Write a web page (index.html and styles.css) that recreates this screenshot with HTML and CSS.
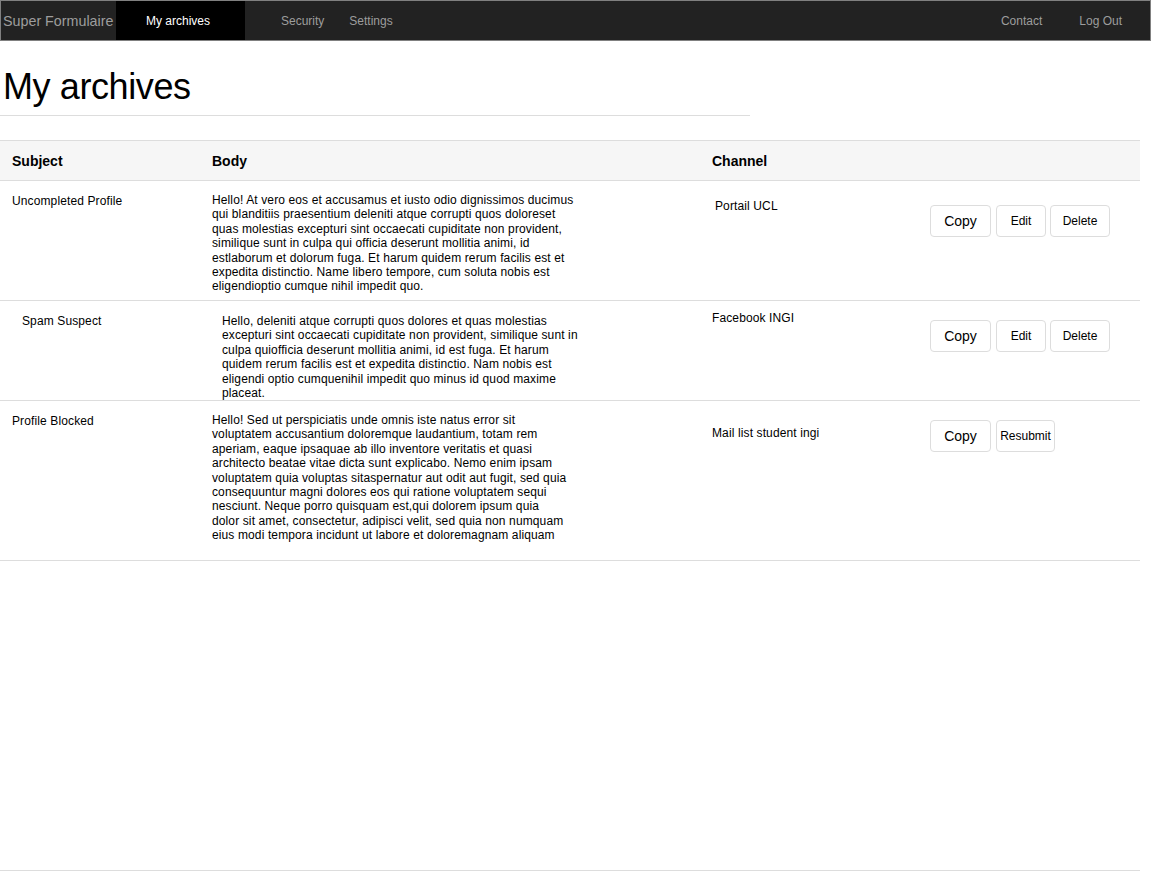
FILE: index.html
```html
<!DOCTYPE html>
<html>
<head>
<meta charset="utf-8">
<title>My archives</title>
<link rel="stylesheet" href="styles.css">
</head>
<body>
<nav class="navbar">
  <a class="brand" href="#">Super Formulaire</a>
  <ul class="nav nav-left">
    <li class="active"><a href="#">My archives</a></li>
    <li class="sec"><a href="#">Security</a></li>
    <li class="set"><a href="#">Settings</a></li>
  </ul>
  <ul class="nav nav-right">
    <li class="contact"><a href="#">Contact</a></li>
    <li class="logout"><a href="#">Log Out</a></li>
  </ul>
</nav>

<main class="page">
  <h1 class="title">My archives</h1>
  <hr class="rule">

  <div class="table">
    <div class="row head">
      <div class="cell c-subject">Subject</div>
      <div class="cell c-body">Body</div>
      <div class="cell c-channel">Channel</div>
      <div class="cell"></div>
    </div>

    <div class="row r1">
      <div class="cell c-subject">Uncompleted Profile</div>
      <div class="cell c-body"><p class="text">Hello! At vero eos et accusamus et iusto odio dignissimos ducimus<br>qui blanditiis praesentium deleniti atque corrupti quos doloreset<br>quas molestias excepturi sint occaecati cupiditate non provident,<br>similique sunt in culpa qui officia deserunt mollitia animi, id<br>estlaborum et dolorum fuga. Et harum quidem rerum facilis est et<br>expedita distinctio. Name libero tempore, cum soluta nobis est<br>eligendioptio cumque nihil impedit quo.</p></div>
      <div class="cell c-channel">Portail UCL</div>
      <div class="cell c-actions">
        <button class="btn btn-copy">Copy</button>
        <button class="btn btn-edit">Edit</button>
        <button class="btn btn-delete">Delete</button>
      </div>
    </div>

    <div class="row r2">
      <div class="cell c-subject">Spam Suspect</div>
      <div class="cell c-body"><p class="text">Hello, deleniti atque corrupti quos dolores et quas molestias<br>excepturi sint occaecati cupiditate non provident, similique sunt in<br>culpa quiofficia deserunt mollitia animi, id est fuga. Et harum<br>quidem rerum facilis est et expedita distinctio. Nam nobis est<br>eligendi optio cumquenihil impedit quo minus id quod maxime<br>placeat.</p></div>
      <div class="cell c-channel">Facebook INGI</div>
      <div class="cell c-actions">
        <button class="btn btn-copy">Copy</button>
        <button class="btn btn-edit">Edit</button>
        <button class="btn btn-delete">Delete</button>
      </div>
    </div>

    <div class="row r3">
      <div class="cell c-subject">Profile Blocked</div>
      <div class="cell c-body"><p class="text">Hello! Sed ut perspiciatis unde omnis iste natus error sit<br>voluptatem accusantium doloremque laudantium, totam rem<br>aperiam, eaque ipsaquae ab illo inventore veritatis et quasi<br>architecto beatae vitae dicta sunt explicabo. Nemo enim ipsam<br>voluptatem quia voluptas sitaspernatur aut odit aut fugit, sed quia<br>consequuntur magni dolores eos qui ratione voluptatem sequi<br>nesciunt. Neque porro quisquam est,qui dolorem ipsum quia<br>dolor sit amet, consectetur, adipisci velit, sed quia non numquam<br>eius modi tempora incidunt ut labore et doloremagnam aliquam</p></div>
      <div class="cell c-channel">Mail list student ingi</div>
      <div class="cell c-actions">
        <button class="btn btn-copy">Copy</button>
        <button class="btn btn-resubmit">Resubmit</button>
      </div>
    </div>
    <div class="row-end"></div>
  </div>

  <footer class="footer"></footer>
</main>
</body>
</html>
```

FILE: styles.css
```css
* { box-sizing: border-box; }

html, body {
  margin: 0;
  padding: 0;
  background: #fff;
  color: #000;
  font-family: "Liberation Sans", Arial, Helvetica, sans-serif;
  font-size: 12px;
}

a { text-decoration: none; }

/* Navbar */
.navbar {
  display: flex;
  align-items: stretch;
  height: 41px;
  background: #222;
  border: 1px solid #808080;
}

.brand {
  display: flex;
  align-items: center;
  padding-left: 2px;
  width: 115px;
  font-size: 14.3px;
  color: #9d9d9d;
  white-space: nowrap;
}

.nav {
  display: flex;
  list-style: none;
  margin: 0;
  padding: 0;
}

.nav li {
  display: flex;
}

.nav a {
  display: flex;
  align-items: center;
  color: #9d9d9d;
  font-size: 12px;
  white-space: nowrap;
}

.nav li.active {
  background: #000;
  width: 129px;
  padding-left: 30px;
}

.nav li.active a { color: #fff; }

.nav li.sec { margin-left: 36px; }
.nav li.set { margin-left: 25px; }

.nav-right {
  margin-left: auto;
}

.nav li.logout { margin-left: 37px; padding-right: 28px; }

/* Page */
.title {
  margin: 26px 0 0 3px;
  font-size: 36px;
  line-height: 40px;
  font-weight: normal;
  letter-spacing: -0.4px;
  color: #000;
}

.rule {
  width: 750px;
  margin: 8px 0 0 0;
  border: 0;
  border-top: 1px solid #ddd;
  height: 0;
}

/* Table */
.table {
  width: 1140px;
  margin-top: 24px;
  letter-spacing: 0.12px;
}

.row {
  display: grid;
  grid-template-columns: 200px 500px 220px 220px;
  border-top: 1px solid #ddd;
}

.row-end {
  border-top: 1px solid #ddd;
}

.head {
  height: 40px;
  background: #f6f6f6;
  font-weight: bold;
  font-size: 14px;
  letter-spacing: 0;
}

.head .cell {
  padding: 12px 12px 0 12px;
  line-height: 16px;
}

.r1 { height: 120px; }
.r2 { height: 100px; }
.r3 { height: 160px; }

.cell {
  line-height: 14.4px;
  padding: 13px 12px 0 12px;
}

.text {
  margin: 0;
  white-space: nowrap;
}

.c-body { padding-top: 12px; }
.r2 .c-body { padding-top: 13px; }
.r2 .c-subject { padding-left: 22px; }
.r2 .c-body { padding-left: 22px; }

.r1 .c-channel { padding: 18px 0 0 15px; }
.r2 .c-channel { padding: 10px 0 0 12px; }
.r3 .c-channel { padding: 25px 0 0 12px; }

.c-actions {
  display: flex;
  align-items: flex-start;
  gap: 4px;
  padding: 19px 0 0 10px;
}
.r1 .c-actions { padding-top: 24px; }

.btn {
  height: 32px;
  padding: 0;
  background: #fff;
  border: 1px solid #ddd;
  border-radius: 4px;
  color: #000;
  font-family: "Liberation Sans", Arial, Helvetica, sans-serif;
  font-size: 12px;
  line-height: 30px;
  text-align: center;
  letter-spacing: 0;
}

.btn-copy { width: 61px; font-size: 14px; }
.btn-edit { width: 50px; margin-left: 1px; }
.btn-delete { width: 60px; }
.btn-resubmit { width: 59px; margin-left: 1px; }

.footer {
  width: 1140px;
  margin-top: 309px;
  border-top: 1px solid #ddd;
  height: 1px;
}
```
